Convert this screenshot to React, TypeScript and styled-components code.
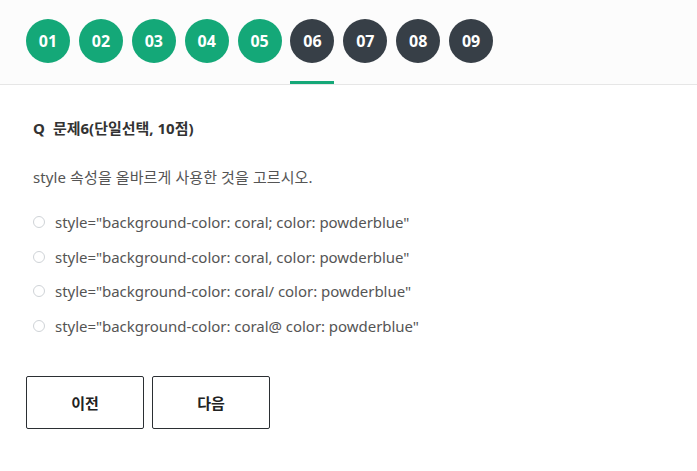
import React, { useState } from 'react';
import styled, { createGlobalStyle } from 'styled-components';

const GlobalStyle = createGlobalStyle`
  html, body {
    margin: 0;
    padding: 0;
    background: #ffffff;
    font-family: "Noto Sans", "Noto Sans CJK KR", sans-serif;
    color: #333;
  }
  * { box-sizing: border-box; }
`;

const Page = styled.div`
  width: 697px;
  min-height: 471px;
  background: #fff;
`;

const StepBar = styled.div`
  display: flex;
  gap: 8.9px;
  padding: 19px 26px 0;
  height: 85px;
  background: #fcfcfc;
  border-bottom: 1px solid #e6e6e6;
`;

const StepItem = styled.div<{ active?: boolean }>`
  display: flex;
  flex-direction: column;
  align-items: center;
  width: 44px;
  height: 100%;
  justify-content: space-between;
  border-bottom: 3px solid ${({ active }) => (active ? '#15a878' : 'transparent')};
  margin-bottom: -1px;
`;

const StepCircle = styled.button<{ done?: boolean }>`
  width: 44px;
  height: 44px;
  border-radius: 50%;
  border: 0;
  padding: 0;
  background: ${({ done }) => (done ? '#14a878' : '#373f47')};
  color: #fff;
  font-family: inherit;
  font-size: 16px;
  font-weight: 700;
  cursor: pointer;
`;

const Body = styled.div`
  padding: 33px 33px 0;
`;

const Title = styled.h2`
  margin: 0;
  font-size: 15px;
  font-weight: 700;
  color: #333;
  line-height: 20px;

  > span {
    margin-right: 8px;
  }
`;

const Question = styled.p`
  margin: 29px 0 0;
  font-size: 15px;
  letter-spacing: 0.1px;
  color: #555;
  line-height: 20px;
`;

const Options = styled.ul`
  list-style: none;
  margin: 25px 0 0;
  padding: 0;
  display: flex;
  flex-direction: column;
  gap: 14.6px;
`;

const Option = styled.li`
  display: flex;
  align-items: center;
  gap: 10px;
  height: 20px;
  font-size: 15px;
  letter-spacing: -0.04px;
  color: #555;
  cursor: pointer;
`;

const Radio = styled.span<{ checked?: boolean }>`
  width: 12px;
  height: 12px;
  border-radius: 50%;
  border: 1px solid #cfd3d7;
  background: ${({ checked }) => (checked ? '#14a878' : '#fff')};
  flex: none;
`;

const Buttons = styled.div`
  display: flex;
  gap: 8px;
  margin: 40px 0 0 -7px;
`;

const NavButton = styled.button`
  width: 118px;
  height: 53px;
  background: #fff;
  border: 1px solid #2b2f33;
  border-radius: 2px;
  font-family: inherit;
  font-size: 15px;
  font-weight: 700;
  color: #222;
  cursor: pointer;
`;

const steps = ['01', '02', '03', '04', '05', '06', '07', '08', '09'];
const options = [
  'style="background-color: coral; color: powderblue"',
  'style="background-color: coral, color: powderblue"',
  'style="background-color: coral/ color: powderblue"',
  'style="background-color: coral@ color: powderblue"',
];

export default function App() {
  const [picked, setPicked] = useState<number | null>(null);
  const current = 5;

  return (
    <Page>
      <GlobalStyle />
      <StepBar>
        {steps.map((s, i) => (
          <StepItem key={s} active={i === current}>
            <StepCircle done={i < current}>{s}</StepCircle>
          </StepItem>
        ))}
      </StepBar>
      <Body>
        <Title>
          <span>Q</span>문제6(단일선택, 10점)
        </Title>
        <Question>style 속성을 올바르게 사용한 것을 고르시오.</Question>
        <Options>
          {options.map((o, i) => (
            <Option key={i} onClick={() => setPicked(i)}>
              <Radio checked={picked === i} />
              {o}
            </Option>
          ))}
        </Options>
        <Buttons>
          <NavButton>이전</NavButton>
          <NavButton>다음</NavButton>
        </Buttons>
      </Body>
    </Page>
  );
}
